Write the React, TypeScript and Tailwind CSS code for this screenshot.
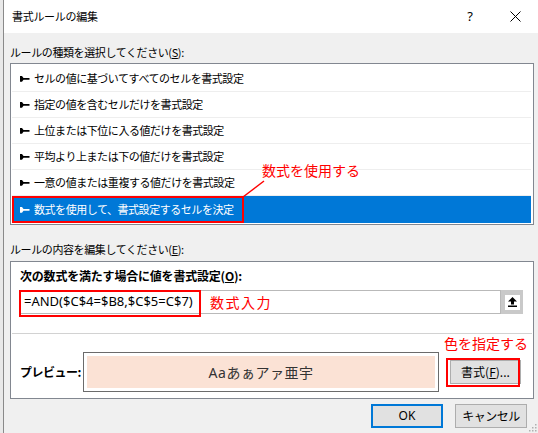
import React from "react";

const Arrow = ({ color = "#000" }: { color?: string }) => (
  <svg width="10" height="6" viewBox="0 0 10 6" className="shrink-0">
    <path d="M0 0 H2 L3.5 2 H9.5 V3.7 H3.5 L2 5.7 H0 Z" fill={color} />
  </svg>
);

const rows = [
  "セルの値に基づいてすべてのセルを書式設定",
  "指定の値を含むセルだけを書式設定",
  "上位または下位に入る値だけを書式設定",
  "平均より上または下の値だけを書式設定",
  "一意の値または重複する値だけを書式設定",
];

export default function App() {
  return (
    <div className="w-[538px] h-[433px] flex bg-[#f0f0f0] font-['Noto_Sans_CJK_JP',sans-serif] text-[11px] text-black overflow-hidden">
      <div className="w-[3px] bg-[#e9e9e9] shrink-0" />
      <div className="flex-1 flex flex-col border-l border-[#8a8a8a] relative">
        {/* title bar */}
        <div className="h-[33px] bg-white flex items-center pl-[8px] shrink-0">
          <span className="text-[11px] tracking-[-0.3px]">書式ルールの編集</span>
          <span className="ml-auto w-[12px] text-center text-[13px] font-['Noto_Sans',sans-serif] mr-[34px]">?</span>
          <svg width="11" height="11" viewBox="0 0 11 11" className="mr-[17px]">
            <path d="M0.5 0.5 L10.5 10.5 M10.5 0.5 L0.5 10.5" stroke="#000" strokeWidth="1" />
          </svg>
        </div>

        {/* body */}
        <div className="flex-1 flex flex-col pl-[6px] pr-[4px] pt-[11px]">
          <div className="h-[16px] leading-[16px] tracking-[-0.4px]">
            ルールの種類を選択してください(<span className="underline">S</span>):
          </div>
          {/* list box */}
          <div className="mt-[3px] border border-[#828790] bg-white pt-[2px] pb-[1px] pl-[1px] pr-[2px] flex flex-col">
            {rows.map((r) => (
              <div key={r} className="h-[26px] border-b border-[#eeeeee] flex items-center pl-[8px] gap-[4px] tracking-[-0.45px]">
                <Arrow />
                <span>{r}</span>
              </div>
            ))}
            <div className="h-[27px] bg-[#0078d7] text-white flex items-center pl-[8px] gap-[4px] tracking-[-0.45px] relative">
              <Arrow color="#fff" />
              <span>数式を使用して、書式設定するセルを決定</span>
              <div className="absolute left-0 top-0 w-[232px] h-[27px] border-2 border-[#ff0000]" />
              <svg className="absolute left-[230px] top-[-16px] overflow-visible" width="24" height="18">
                <path d="M1 17 L22 1" stroke="#ff0000" strokeWidth="1.5" />
              </svg>
              <span className="absolute left-[250px] top-[-36px] text-[14px] text-[#ff0000] leading-[20px] tracking-[0px]">
                数式を使用する
              </span>
            </div>
          </div>

          <div className="mt-[16px] h-[16px] leading-[16px] tracking-[-0.4px]">
            ルールの内容を編集してください(<span className="underline">E</span>):
          </div>
          {/* group box */}
          <div className="mt-[4px] border border-[#828790] bg-white flex flex-col pt-[6px] pb-[6px]">
            <div className="pl-[9px] h-[16px] leading-[16px] font-bold text-[12px] tracking-[-0.2px]">
              次の数式を満たす場合に値を書式設定(<span className="underline">O</span>):
            </div>
            {/* formula input */}
            <div className="mt-[6px] ml-[8px] mr-[10px] h-[24px] flex relative">
              <div className="flex-1 border border-[#b9b9b9] bg-white flex items-center pl-[4px] text-[13px] font-['Noto_Sans',sans-serif]">
                =AND($C$4=$B8,$C$5=C$7)
              </div>
              <div className="w-[22px] bg-[#c9c9c9] flex items-center justify-center">
                <div className="w-[15px] h-[15px] bg-white flex items-center justify-center">
                  <svg width="9" height="10" viewBox="0 0 9 10">
                    <path d="M4.5 0 L9 4.5 H6 V7.5 H3 V4.5 H0 Z" fill="#000" />
                    <rect x="0" y="8.5" width="9" height="1.5" fill="#000" />
                  </svg>
                </div>
              </div>
              <div className="absolute left-0 top-0 w-[182px] h-[27px] border-2 border-[#ff0000]" />
              <span className="absolute left-[191px] top-[1px] text-[14px] leading-[22px] text-[#ff0000] tracking-[1.5px]">
                数式入力
              </span>
            </div>
            <div className="mt-[19px] mx-[1px] h-px bg-[#d2d2d2]" />
            <div className="h-[18px] leading-[18px] flex justify-end pr-[5px] text-[14px] text-[#ff0000]">
              色を指定する
            </div>
            <div className="h-[40px] flex items-center pl-[9px]">
              <span className="w-[63px] font-bold text-[12px] tracking-[-0.5px]">プレビュー:</span>
              <div className="w-[356px] h-[40px] border border-[#6b6b6b] p-[3px]">
                <div className="w-full h-full bg-[#fbe2d5] flex items-center justify-center text-[14px] text-[#333] tracking-[0.5px] font-['Noto_Sans','Noto_Sans_CJK_JP',sans-serif]">
                  Aaあぁアァ亜宇
                </div>
              </div>
              <div className="ml-[7px] relative w-[75px] h-[29px] flex items-center">
                <div className="absolute left-[0px] top-0 w-[74px] h-[29px] border-2 border-[#ff0000]" />
                <div className="ml-[4px] w-[72px] h-[24px] bg-[#e1e1e1] border border-[#adadad] flex items-center justify-center text-[12px]">
                  書式(<span className="underline">F</span>)...
                </div>
              </div>
            </div>
          </div>

          {/* buttons */}
          <div className="mt-[5px] flex justify-end gap-[12px] pr-[7px]">
            <div className="w-[72px] h-[24px] bg-[#e1e1e1] border-2 border-[#0078d7] flex items-center justify-center text-[12px] font-['Noto_Sans',sans-serif]">
              OK
            </div>
            <div className="w-[72px] h-[24px] bg-[#e1e1e1] border border-[#adadad] flex items-center justify-center text-[12px] tracking-[-0.5px]">
              キャンセル
            </div>
          </div>
        </div>
        <svg className="absolute right-[1px] bottom-[1px]" width="8" height="8" viewBox="0 0 8 8">
          <rect x="6" y="0" width="1.5" height="1.5" fill="#b0b0b0" />
          <rect x="3" y="3" width="1.5" height="1.5" fill="#b0b0b0" />
          <rect x="6" y="3" width="1.5" height="1.5" fill="#b0b0b0" />
          <rect x="0" y="6" width="1.5" height="1.5" fill="#b0b0b0" />
          <rect x="3" y="6" width="1.5" height="1.5" fill="#b0b0b0" />
          <rect x="6" y="6" width="1.5" height="1.5" fill="#b0b0b0" />
        </svg>
      </div>
    </div>
  );
}
